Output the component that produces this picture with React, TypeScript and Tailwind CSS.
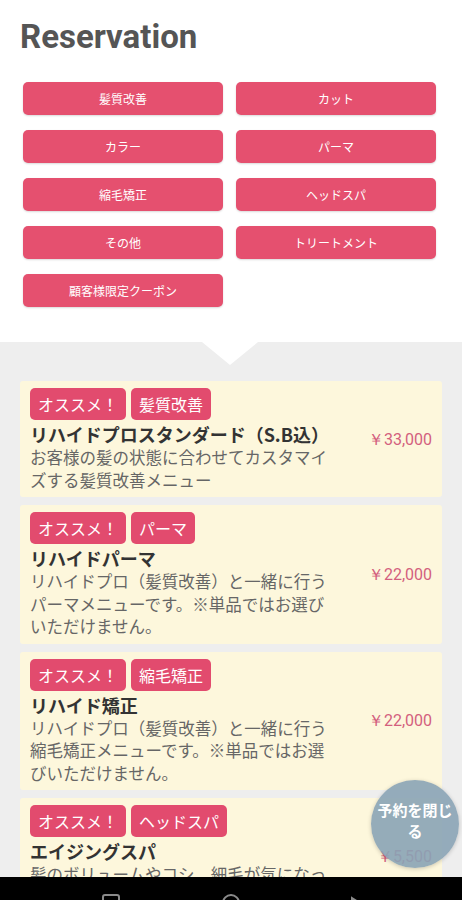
import React from "react";

const categories = [
  "髪質改善",
  "カット",
  "カラー",
  "パーマ",
  "縮毛矯正",
  "ヘッドスパ",
  "その他",
  "トリートメント",
  "顧客様限定クーポン",
];

interface Menu {
  tag: string;
  title: string;
  desc: string;
  price: string;
}

const menus: Menu[] = [
  {
    tag: "髪質改善",
    title: "リハイドプロスタンダード（S.B込）",
    desc: "お客様の髪の状態に合わせてカスタマイズする髪質改善メニュー",
    price: "￥33,000",
  },
  {
    tag: "パーマ",
    title: "リハイドパーマ",
    desc: "リハイドプロ（髪質改善）と一緒に行うパーマメニューです。※単品ではお選びいただけません。",
    price: "￥22,000",
  },
  {
    tag: "縮毛矯正",
    title: "リハイド矯正",
    desc: "リハイドプロ（髪質改善）と一緒に行う縮毛矯正メニューです。※単品ではお選びいただけません。",
    price: "￥22,000",
  },
  {
    tag: "ヘッドスパ",
    title: "エイジングスパ",
    desc: "髪のボリュームやコシ、細毛が気になっている方におすすめのスパメニュー",
    price: "￥5,500",
  },
];

const jp = { fontFamily: '"Noto Sans CJK JP", "Noto Sans", sans-serif' };

const Tag = ({ children }: { children: React.ReactNode }) => (
  <span className="flex h-[32px] items-center rounded-[5px] bg-[#e24b6e] px-[8px] text-[16px] text-white">
    {children}
  </span>
);

const MenuCard = ({ menu }: { menu: Menu }) => (
  <div className="flex items-center rounded-[3px] bg-[#fdf7dc] pt-[7px] pb-[6px] pl-[10px] pr-[10px]">
    <div className="w-[300px]">
      <div className="flex gap-[5px]">
        <Tag>オススメ！</Tag>
        <Tag>{menu.tag}</Tag>
      </div>
      <div className="mt-[3px] text-[18px] font-bold leading-[23px] text-[#333]">{menu.title}</div>
      <div className="text-[16.5px] leading-[22.5px] text-[#666]">{menu.desc}</div>
    </div>
    <div className="flex-1 text-right text-[16px] text-[#d35f7e]" style={{ fontFamily: '"Roboto", sans-serif' }}>
      {menu.price}
    </div>
  </div>
);

export default function App() {
  return (
    <div className="relative flex h-[900px] w-[462px] flex-col overflow-hidden bg-white" style={jp}>
      <div className="flex-1 overflow-hidden">
        <h1
          className="pl-[20px] pt-[18px] text-[33px] font-bold leading-[38px] text-[#555]"
          style={{ fontFamily: "Roboto, sans-serif" }}
        >
          Reservation
        </h1>
        <div className="grid grid-cols-[200px_200px] gap-x-[13px] gap-y-[15px] pl-[23px] pt-[26px]">
          {categories.map((c) => (
            <button
              key={c}
              className="flex h-[33px] items-center justify-center rounded-[5px] bg-[#e5506f] text-[12px] text-white shadow-[0_1px_2px_rgba(0,0,0,0.15)]"
            >
              {c}
            </button>
          ))}
        </div>
        <div className="mt-[35px] bg-[#eeeeee] px-[20px] pb-[20px]">
          <div className="flex justify-center">
            <svg width="56" height="23" viewBox="0 0 56 23" className="-ml-[2px]">
              <polygon points="0,0 56,0 28,23" fill="#ffffff" />
            </svg>
          </div>
          <div className="mt-[16px] flex flex-col gap-[8px]">
            {menus.map((m) => (
              <MenuCard key={m.title} menu={m} />
            ))}
          </div>
        </div>
      </div>

      <button className="absolute left-[371px] top-[780px] flex h-[88px] w-[88px] items-center justify-center rounded-full bg-[#8aa3b5]/90 px-[6px] pb-[8px] text-[15px] font-bold leading-[21px] text-white shadow-[0_1px_4px_rgba(0,0,0,0.2)]">
        予約を閉じる
      </button>

      <div className="relative h-[23px] shrink-0 bg-black">
        <svg width="462" height="23" viewBox="0 0 462 23" className="absolute left-0 top-0">
          <rect x="103" y="18" width="16" height="14" rx="2" fill="none" stroke="#8a8a8a" strokeWidth="2" />
          <circle cx="231" cy="26" r="8" fill="none" stroke="#8a8a8a" strokeWidth="2" />
          <polygon points="352,21 366,30 352,30" fill="none" stroke="#8a8a8a" strokeWidth="2" />
        </svg>
      </div>
    </div>
  );
}
